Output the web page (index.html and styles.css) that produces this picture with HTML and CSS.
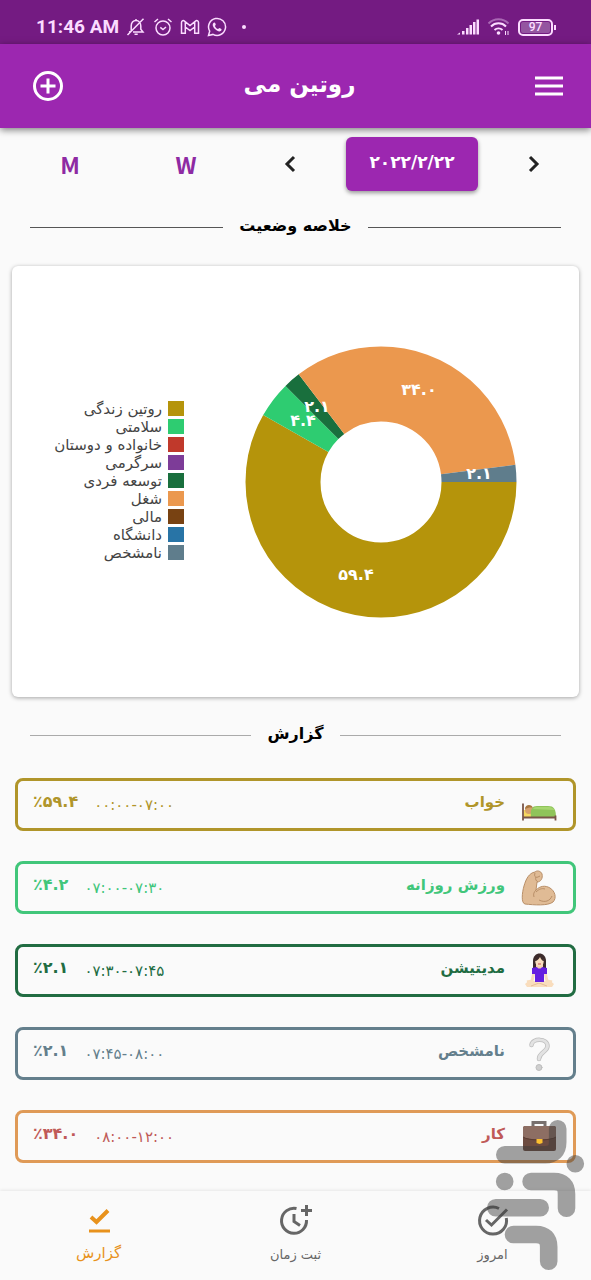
FILE: index.html
```html
<!DOCTYPE html>
<html lang="fa" dir="rtl">
<head>
<meta charset="utf-8">
<meta name="viewport" content="width=device-width, initial-scale=1">
<title>روتین می</title>
<link rel="stylesheet" href="styles.css">
</head>
<body>
<div class="app">
  <div class="status" dir="ltr">
    <span class="clock">11:46 AM</span>
    <svg class="s-icon" viewBox="0 0 20 20"><path d="M5.2 14.2V9c0-3.2 1.8-5.4 4.8-5.4S14.800 6 14.800 9v3.200l2.200 2.800H7M10 3.500V2M8.500 17.200h3.200M1.500 18 17.500 1.800M5 14.500l-2 .5"/></svg>
    <svg class="s-icon" viewBox="0 0 20 20"><circle cx="10" cy="11" r="7"/><path d="M7.300 10.300 10 12.500l3-2.500M1.500 5l3.500-3M18.500 5 15 2"/></svg>
    <svg class="s-icon" viewBox="0 0 20 20"><path d="M1.500 16.200V5.500c0-2 2-2.300 3-1.400L10 8.500l5.500-4.400c1-.9 3-.6 3 1.400v10.700h-3.800V10L10 13.500 5.300 10v6.200zM5.300 10V5M14.700 10V5"/></svg>
    <svg class="s-icon" viewBox="0 0 20 20"><path d="M1.500 18.500l1.200-4.300a8.500 8.500 0 1 1 3.300 3.200z"/><path class="solid" d="M7.200 5.500c-2.500 1.400-1.500 4.300.8 6.600 2.500 2.400 5.300 3.500 6.500 1 .4-1-.2-1.300-2.200-2.200l-1.200 1.200c-1.500-.6-2.600-1.700-3.200-3.200l.9-1.100c-.5-1.600-.8-2.500-1.600-2.300z"/></svg>
    <span class="dot"></span>
    <span class="spacer"></span>
    <svg class="signal" viewBox="0 0 24 18"><path d="M1 16.500h3v-2zM6 13h2.500v3.500H6zM10 10h2.500v6.500H10zM13.500 7H16v9.500h-2.500zM17 4h2.500v12.500H17zM20.500 1.500H23v15h-2.500z"/></svg>
    <svg class="wifi" viewBox="0 0 24 20"><path class="faint" d="M1.500 6.500a14 14 0 0 1 20 0"/><path d="M4 9.500a10.500 10.500 0 0 1 15 0M7.500 13a6 6 0 0 1 8 0"/><circle cx="11.500" cy="16" r="1.800"/><path class="thin" d="M18.500 14v4M21 14v4"/></svg>
    <span class="battery"><span class="level">97</span></span>
  </div>

  <header class="bar">
    <button class="icon-btn" aria-label="منو"><svg width="28" height="20" viewBox="0 0 28 20"><path d="M0 2h28M0 10h28M0 18h28" stroke="#fff" stroke-width="3"/></svg></button>
    <h1>روتین می</h1>
    <button class="icon-btn" aria-label="افزودن"><svg width="32" height="32" viewBox="0 0 32 32" fill="none" stroke="#fff" stroke-width="3"><circle cx="16" cy="16" r="13.500"/><path d="M16 8.500v15M8.500 16h15"/></svg></button>
  </header>

  <main>
    <div class="range">
      <button class="plain" aria-label="بعدی"><svg width="12" height="18" viewBox="0 0 12 18"><path d="M2 2l7 7-7 7"/></svg></button>
      <button class="date" dir="ltr">۲۰۲۲/۲/۲۲</button>
      <button class="plain" aria-label="قبلی"><svg width="12" height="18" viewBox="0 0 12 18"><path d="M10 2 3 9l7 7"/></svg></button>
      <button class="plain letter">W</button>
      <button class="plain letter">M</button>
    </div>

    <h2 class="heading dark">خلاصه وضعیت</h2>

    <section class="card">
      <svg class="pie" viewBox="0 0 272 272" direction="ltr">
        <g fill="none" stroke-width="75">
          <circle cx="136" cy="136" r="98" pathLength="102" stroke="#b5940b" stroke-dasharray="59.400 102"/>
          <circle cx="136" cy="136" r="98" pathLength="102" stroke="#2ecc71" stroke-dasharray="4.400 102" stroke-dashoffset="-59.400"/>
          <circle cx="136" cy="136" r="98" pathLength="102" stroke="#196f3d" stroke-dasharray="2.100 102" stroke-dashoffset="-63.800"/>
          <circle cx="136" cy="136" r="98" pathLength="102" stroke="#eb984e" stroke-dasharray="34 102" stroke-dashoffset="-65.900"/>
          <circle cx="136" cy="136" r="98" pathLength="102" stroke="#5f7d8c" stroke-dasharray="2.100 102" stroke-dashoffset="-99.900"/>
        </g>
        <g class="pie-text">
          <text x="111" y="234">۵۹.۴</text>
          <text x="58" y="80">۴.۴</text>
          <text x="72" y="66">۲.۱</text>
          <text x="174" y="49">۳۴.۰</text>
          <text x="234" y="133">۲.۱</text>
        </g>
      </svg>
      <ul class="legend">
        <li class="c-life">روتین زندگی</li>
        <li class="c-health">سلامتی</li>
        <li class="c-family">خانواده و دوستان</li>
        <li class="c-fun">سرگرمی</li>
        <li class="c-growth">توسعه فردی</li>
        <li class="c-job">شغل</li>
        <li class="c-money">مالی</li>
        <li class="c-uni">دانشگاه</li>
        <li class="c-none">نامشخص</li>
      </ul>
    </section>

    <h2 class="heading">گزارش</h2>

    <ul class="report">
      <li class="row sleep">
        <svg class="emoji" viewBox="0 0 36 36"><path d="M3 28V24h6v-3h2v7z" fill="#ffe08a"/><path d="M3 23h9v7H3z" fill="#f6d860"/><circle cx="8" cy="23" r="4" fill="#d6a06c"/><path d="M4 22c0-5 7-5 8-1-3-1-5 0-8 1z" fill="#a8763e"/><path d="M10 31c-1-9 1-12 6-12h11c6 0 8 3 8 12z" fill="#8fc45a"/><path d="M12 22c1-2 3-2 5-2h10c4 0 6 2 6 3z" fill="#a6d66f"/><path d="M2 16.500v17M2 30.500h33M34.500 28.500v5" stroke="#795548" stroke-width="1.800" fill="none"/></svg>
        <span class="name">خواب</span>
        <span class="time" dir="ltr">۰۰:۰۰-۰۷:۰۰</span>
        <strong dir="ltr">٪۵۹.۴</strong>
      </li>
      <li class="row sport">
        <svg class="emoji" viewBox="0 0 36 36"><path d="M14 2c2-2 6-1 7 2 1 4-1 8-5 8l-1 8c4-4 9-5 14-2 5 3 7 10 3 14-5 4-19 3-28 2-4-1-3-11-1-18C5 9 8 3 14 2z" fill="#e0bb95" stroke="#b98f68"/><path d="M14 3c-1 3 0 5 3 4l2-1M15 7c-1 2 0 4 2 5M15 20c-2 2-3 4-2 7M15 22c3-3 6-4 9-3M18 30c6 3 11 1 13-4" fill="none" stroke="#b98f68" stroke-width="1"/></svg>
        <span class="name">ورزش روزانه</span>
        <span class="time" dir="ltr">۰۷:۰۰-۰۷:۳۰</span>
        <strong dir="ltr">٪۴.۲</strong>
      </li>
      <li class="row calm">
        <svg class="emoji" viewBox="0 0 36 36"><path d="M12 17V8c0-10 13-10 13 0v9z" fill="#3c2b2b"/><path d="M15 11h7v6h-7z" fill="#f3cfae"/><ellipse cx="18.500" cy="8.500" rx="4.200" ry="5" fill="#f9ddbd"/><path d="M14 8c2 0 4-2 5-4 1 2 2 4 4 4 0-7-9-7-9 0z" fill="#3c2b2b"/><path d="M17 11h3" stroke="#c65353"/><path d="M13 19l-2 9-5 1M24 19l2 9 5 1" fill="none" stroke="#f9ddbd" stroke-width="3"/><path d="M4 31c5-5 10-3 14-1 5-2 10-4 15 1l-2 3H6z" fill="#f9ddbd"/><path d="M10 33l8-3 8 3" fill="none" stroke="#e6bd95"/><path d="M11 15l5-1c1 2 4 2 5 0l5 1v6h-3v8h-9v-8h-3z" fill="#651fe0"/></svg>
        <span class="name">مدیتیشن</span>
        <span class="time" dir="ltr">۰۷:۳۰-۰۷:۴۵</span>
        <strong dir="ltr">٪۲.۱</strong>
      </li>
      <li class="row unknown">
        <svg class="emoji" viewBox="0 0 36 36" fill="none" stroke-linecap="round"><path d="M10.500 9c1-7 16-7 16 1 0 6-8.500 6-8.500 13" stroke="#bdbdbd" stroke-width="4.500"/><path d="M10.500 9c1-7 16-7 16 1 0 6-8.500 6-8.500 13" stroke="#e2e2e2" stroke-width="3"/><circle cx="18" cy="31.500" r="3" fill="#cfcfcf" stroke="#bdbdbd"/></svg>
        <span class="name">نامشخص</span>
        <span class="time" dir="ltr">۰۷:۴۵-۰۸:۰۰</span>
        <strong dir="ltr">٪۲.۱</strong>
      </li>
      <li class="row work">
        <svg class="emoji" viewBox="0 0 36 36"><path d="M12 8V3.500h12V8" fill="none" stroke="#78706e" stroke-width="3"/><rect x="2" y="7" width="33" height="25" rx="2" fill="#6d4c41"/><path d="M2 9c0-1 1-2 2-2h29c1 0 2 1 2 2v9c-5 3-28 3-33 0z" fill="#8d6e63"/><path d="M2 18c5 4 28 4 33 0" fill="none" stroke="#5a3c32"/><path d="M15.500 20h6v4l-3 1-3-1z" fill="#fdc02f"/></svg>
        <span class="name">کار</span>
        <span class="time" dir="ltr">۰۸:۰۰-۱۲:۰۰</span>
        <strong dir="ltr">٪۳۴.۰</strong>
      </li>
    </ul>
  </main>

  <nav class="tabs">
    <a href="#today"><svg viewBox="0 0 34 34"><path d="M23 5.500A13.500 13.500 0 1 0 30.300 15M10 17l5.500 5L31 6.500"/></svg><span>امروز</span></a>
    <a href="#log"><svg viewBox="0 0 34 34"><path d="M17.500 5.500A12.500 12.500 0 1 0 27.500 17M15 11v7.500l6 4"/><path d="M27.500 2v11M22 7.500h11"/></svg><span>ثبت زمان</span></a>
    <a href="#report" class="active" aria-current="page"><svg viewBox="0 0 34 34"><path class="heavy" d="M9 14l5.500 5L26 7.500"/><path d="M7 28h21"/></svg><span>گزارش</span></a>
  </nav>

  <svg class="mark" viewBox="0 0 98 152" aria-hidden="true">
    <g fill="none" stroke="#3c3c3c" stroke-width="17.600" stroke-linecap="round">
      <path d="M70.700 9.800V23q0 12.700-12.700 12.700H17.800M88.300 44.700h.01M17.700 62.500h.01M44.100 62.500H67q12.500 0 12.500 12.500v14.200M8.800 88.800h44.400M26.500 115.500H49q12.700 0 12.700 12.500v14.200"/>
    </g>
  </svg>
</div>
</body>
</html>
```
FILE: styles.css
```css
* { box-sizing: border-box; }
body {
  margin: 0;
  background: #fafafa;
  color: #000;
  font-family: "DejaVu Sans", sans-serif;
}
button { font: inherit; border: 0; padding: 0; background: none; cursor: pointer; }
ul { list-style: none; margin: 0; padding: 0; }
h1, h2 { margin: 0; }

.app {
  position: relative;
  display: flex;
  flex-direction: column;
  min-height: 100vh;
}

.status {
  display: flex;
  align-items: center;
  gap: 7px;
  height: 44px;
  padding: 10px 35px 0 36px;
  background: #741b82;
  color: #fbdcff;
}
.clock { font: 700 19px/24px Roboto, sans-serif; }
.s-icon { width: 20px; height: 20px; fill: none; stroke: #fbdcff; stroke-width: 1.5; }
.s-icon .solid { fill: #fbdcff; stroke: none; }
.dot { width: 4px; height: 4px; margin-left: 8px; border-radius: 50%; background: #fbdcff; }
.spacer { flex: 1; }
.signal { width: 24px; height: 18px; fill: #fbdcff; }
.wifi { width: 24px; height: 20px; fill: none; stroke: #fbdcff; stroke-width: 2; }
.wifi circle { fill: #fbdcff; stroke: none; }
.wifi .faint { opacity: .4; }
.wifi .thin { stroke-width: 1; }
.battery {
  position: relative;
  width: 35px;
  height: 17px;
  margin-right: 3px;
  padding: 1px;
  border: 2px solid #fbdcff;
  border-radius: 5px;
}
.battery::after {
  content: "";
  position: absolute;
  right: -5px;
  top: 4px;
  width: 2px;
  height: 5px;
  background: #fbdcff;
}
.level {
  display: block;
  border-radius: 2px;
  background: #9455a0;
  text-align: center;
  font: 500 12px/11px Roboto, sans-serif;
}

.bar {
  display: flex;
  align-items: center;
  justify-content: space-between;
  height: 84px;
  padding: 0 28px 0 32px;
  background: #9c27b0;
  color: #fff;
  box-shadow: 0 2px 7px rgba(0, 0, 0, .5);
}
.bar h1 { font-size: 23px; line-height: 40px; padding-bottom: 4px; }
.icon-btn { display: flex; }

.range {
  display: grid;
  grid-template-columns: 92fr 152fr 92fr 116fr 116fr;
  padding: 9px 11px 0 12px;
}
.plain { display: flex; align-items: center; justify-content: center; height: 54px; }
.plain svg { fill: none; stroke: #222; stroke-width: 3; }
.letter { color: #8e2aa3; font: 700 23px/32px "Noto Sans CJK SC", sans-serif; }
.date {
  margin: 0 10px;
  padding-bottom: 4px;
  border-radius: 6px;
  background: #9c27b0;
  box-shadow: 0 2px 4px rgba(0, 0, 0, .4);
  color: #fff;
  font-size: 17px;
  font-weight: 700;
}

.heading {
  display: flex;
  align-items: center;
  gap: 16px;
  padding: 0 30px;
  margin-top: 25px;
  font-size: 16px;
  line-height: 24px;
}
.heading::before, .heading::after { content: ""; flex: 1; height: 1px; margin-top: 2px; background: #aaa; }
.heading.dark { margin-top: 23px; }
.heading.dark::before, .heading.dark::after { background: #555; }

.card {
  display: flex;
  align-items: center;
  justify-content: space-between;
  min-height: 431px;
  margin: 28px 12px 0;
  padding: 0 62px 0 42px;
  border-radius: 6px;
  background: #fff;
  box-shadow: 0 1px 4px rgba(0, 0, 0, .35);
}
.pie { flex: none; width: 272px; }
.pie-text { fill: #fff; font-size: 16px; font-weight: 700; text-anchor: middle; }
.legend { width: 130px; padding-bottom: 2px; }
.legend li {
  display: flex;
  align-items: center;
  gap: 6px;
  height: 18px;
  color: #444;
  font-size: 15px;
  line-height: 18px;
  white-space: nowrap;
}
.legend li::before { content: ""; flex: none; width: 16px; height: 15px; background: currentColor; }
.legend .c-life::before { background: #b5940b; }
.legend .c-health::before { background: #2ecc71; }
.legend .c-family::before { background: #c0392b; }
.legend .c-fun::before { background: #7d3c98; }
.legend .c-growth::before { background: #196f3d; }
.legend .c-job::before { background: #eb984e; }
.legend .c-money::before { background: #784212; }
.legend .c-uni::before { background: #2874a6; }
.legend .c-none::before { background: #5f7d8c; }

.report { display: grid; gap: 30px; margin: 32px 15px 28px; }
.row {
  display: flex;
  align-items: center;
  height: 53px;
  padding: 0 16px 0 15px;
  border: 3px solid;
  border-radius: 8px;
}
.emoji { width: 36px; height: 36px; }
.name { flex: 1; padding: 0 16px 6px 0; font-size: 15px; font-weight: 700; }
.time { padding-left: 16px; font-size: 15px; }
.row strong { padding-bottom: 6px; font-size: 16px; }
.sleep { color: #b0952a; }
.sport { color: #41c67a; }
.calm { color: #216c42; }
.unknown { color: #647f8c; }
.work { color: #c05a58; border-color: #df9a57; }

.tabs {
  display: grid;
  grid-template-columns: repeat(3, 1fr);
  height: 89px;
  margin-top: auto;
  background: #fafafa;
  box-shadow: 0 -1px 3px rgba(0, 0, 0, .08);
}
.tabs a {
  display: flex;
  flex-direction: column;
  align-items: center;
  gap: 6px;
  padding-top: 12px;
  color: #666;
  font-size: 13px;
  line-height: 24px;
  text-decoration: none;
}
.tabs svg { width: 34px; height: 34px; fill: none; stroke: currentColor; stroke-width: 3; }
.tabs .heavy { stroke-width: 4; }
.tabs .active { gap: 4px; color: #e8921c; font-size: 15px; }

.mark {
  position: absolute;
  right: 6px;
  bottom: 9px;
  width: 98px;
  height: 152px;
  opacity: .47;
  pointer-events: none;
}
```
